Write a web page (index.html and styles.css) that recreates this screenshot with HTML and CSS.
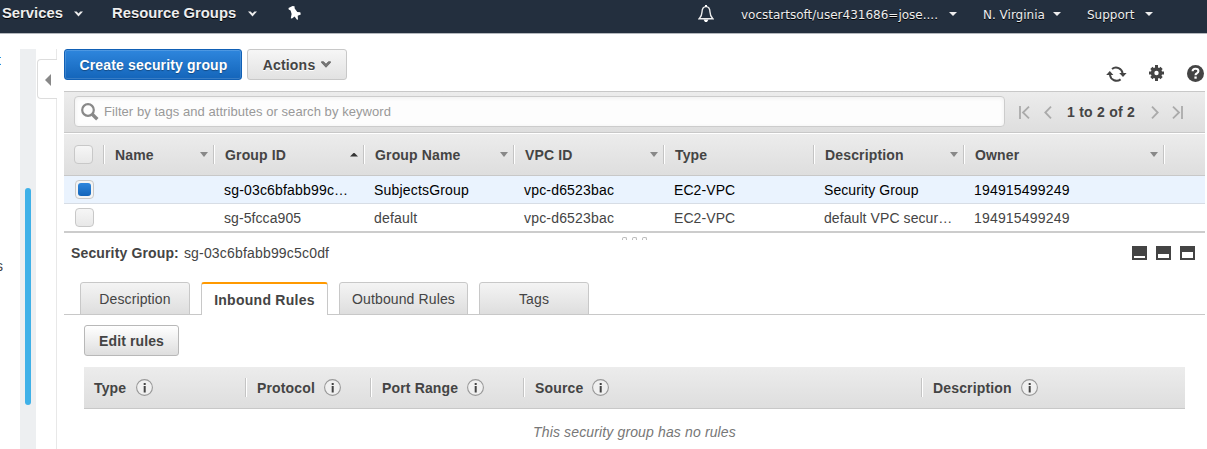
FILE: index.html
```html
<!DOCTYPE html>
<html lang="en">
<head>
<meta charset="utf-8">
<title>Security Groups</title>
<link rel="stylesheet" href="styles.css">
</head>
<body>
<svg class="defs" width="0" height="0">
  <symbol id="chev" viewBox="0 0 9 6"><path d="M0 0.5H2.6L4.5 2.5L6.4 0.5H9L4.5 5.5Z"/></symbol>
  <symbol id="info" viewBox="0 0 17 17"><circle cx="8.5" cy="8.5" r="7.9" fill="#f0f0f0" stroke="#999" stroke-width="1.1"/><path d="M7.7 4h2v2h-2zM7.7 7h2v6.5h-2z" fill="#444"/></symbol>
</svg>
<header class="nav">
  <span class="nav-main services">Services</span><svg class="chev c1"><use href="#chev"/></svg>
  <span class="nav-main">Resource Groups</span><svg class="chev c2"><use href="#chev"/></svg>
  <svg class="pin" width="13" height="14" viewBox="0 0 13 14"><path d="M0.5 2L4.5 0L6.5 0.3L6.7 2.6L9.3 6L12.3 6.2L12.8 8.6L9.7 9.8L10 13.6L9 13.8L6.6 10.6L4 12.6L2.8 12.2L3.6 8L2.6 4.6L0.7 3.6Z" fill="#fff"/></svg>
  <div class="nav-right">
    <svg class="bell" width="16" height="18" viewBox="0 0 16 18"><path d="M8 1.6C5 1.6 4.1 4 4 7C3.9 10.5 3 12 1.2 13.7H14.8C13 12 12.1 10.5 12 7C11.9 4 11 1.6 8 1.6Z" fill="none" stroke="#eee" stroke-width="1.4"/><path d="M7 0h2v2H7zM5.5 14.6h5L9 17H7z" fill="#fff"/></svg>
    <span class="nav-sub user">vocstartsoft/user431686=jose....</span><i class="caret k1"></i>
    <span class="nav-sub region">N. Virginia</span><i class="caret k2"></i>
    <span class="nav-sub support">Support</span><i class="caret"></i>
  </div>
</header>
<div class="page">
  <aside class="side"><span class="side-link blue">t</span><span class="side-link dark">s</span></aside>
  <div class="track"><div class="thumb"></div></div>
  <div class="gutter"><div class="stub"></div><div class="collapse"><i></i></div><div class="line"></div></div>
  <main class="main">
    <div class="toolbar">
      <button class="btn primary">Create security group</button>
      <button class="btn actions">Actions <svg width="10" height="7" viewBox="0 0 10 7"><path d="M0.5 0.7H2.6L5 3.2L7.4 0.7H9.5V1.6L5 6.3L0.5 1.6Z" fill="#777" stroke="#444" stroke-width=".6"/></svg></button>
      <div class="tools">
        <svg width="21" height="17" viewBox="0 0 21 17"><path d="M6 3A6.6 6.6 0 0 1 16.6 7.5M14.6 13.4A6.6 6.6 0 0 1 4 9" fill="none" stroke="#444" stroke-width="2"/><path d="M13.2 7H20.6L17 11ZM0.2 9H7.4L3.8 5Z" fill="#444"/></svg>
        <svg class="gear" width="15" height="16" viewBox="0 0 15 16"><g fill="#444"><circle cx="7.5" cy="8" r="5.7"/><path d="M6 0h3v16H6zM0 6.5h15v3H0z"/><path d="M5.9 0.8h3.2v14.4H5.9zM0.3 6.4h14.4v3.2H0.3z" transform="rotate(45 7.5 8)"/></g><circle cx="7.5" cy="8" r="2.2" fill="#fff"/></svg>
        <svg width="17" height="17" viewBox="0 0 17 17"><circle cx="8.5" cy="8.5" r="8.5" fill="#444"/><path d="M5.6 6.3Q5.7 3.8 8.5 3.8Q11.4 3.8 11.4 6.1Q11.4 7.4 10 8.2Q8.5 9 8.5 10.3" fill="none" stroke="#fff" stroke-width="2.1"/><path d="M7.4 11.5h2.3v2.2H7.4z" fill="#fff"/></svg>
      </div>
    </div>
    <div class="filter">
      <div class="search"><svg width="18" height="18" viewBox="0 0 18 18"><circle cx="7" cy="7" r="5.8" fill="none" stroke="#888" stroke-width="2.2"/><path d="M11 11L16.3 16.2" stroke="#888" stroke-width="3.4"/></svg><span>Filter by tags and attributes or search by keyword</span></div>
      <div class="pager">
        <svg width="11" height="13" viewBox="0 0 11 13"><path d="M1 0V13M10 0.7L4 6.5L10 12.3"/></svg>
        <svg class="prev" width="8" height="13" viewBox="0 0 8 13"><path d="M7 0.7L1.3 6.5L7 12.3"/></svg>
        <b>1 to 2 of 2</b>
        <svg class="next" width="8" height="13" viewBox="0 0 8 13"><path d="M1 0.7L6.7 6.5L1 12.3"/></svg>
        <svg width="11" height="13" viewBox="0 0 11 13"><path d="M10 0V13M1 0.7L7 6.5L1 12.3"/></svg>
      </div>
    </div>
    <div class="grid head">
      <div><i class="check"></i></div><div><span>Name</span><i class="sort"></i></div><div><span>Group ID</span><i class="sort up"></i></div><div><span>Group Name</span><i class="sort"></i></div><div><span>VPC ID</span><i class="sort"></i></div><div><span>Type</span></div><div><span>Description</span><i class="sort"></i></div><div><span>Owner</span><i class="sort"></i></div><div></div>
    </div>
    <div class="grid row selected">
      <div><i class="check on"></i></div><div></div><div>sg-03c6bfabb99c…</div><div>SubjectsGroup</div><div>vpc-d6523bac</div><div class="tight">EC2-VPC</div><div class="tight">Security Group</div><div>194915499249</div><div></div>
    </div>
    <div class="grid row">
      <div><i class="check"></i></div><div></div><div class="tight">sg-5fcca905</div><div>default</div><div>vpc-d6523bac</div><div class="tight">EC2-VPC</div><div class="tight">default VPC secur…</div><div>194915499249</div><div></div>
    </div>
    <div class="splitter"><i></i><i></i><i></i></div>
    <div class="detail">
      <b>Security Group:</b><span class="sgid">sg-03c6bfabb99c5c0df</span>
      <div class="layouts"><i class="low"></i><i class="mid"></i><i class="high"></i></div>
    </div>
    <div class="tabs">
      <div class="tab t1">Description</div><div class="tab active">Inbound Rules</div><div class="tab t3">Outbound Rules</div><div class="tab t4">Tags</div>
    </div>
    <section class="panel">
      <button class="btn edit">Edit rules</button>
      <div class="rules">
        <div class="type"><span>Type</span><svg><use href="#info"/></svg></div><div><span>Protocol</span><svg><use href="#info"/></svg></div><div><span>Port Range</span><svg><use href="#info"/></svg></div><div><span>Source</span><svg><use href="#info"/></svg></div><div><span>Description</span><svg><use href="#info"/></svg></div>
      </div>
      <p class="empty">This security group has no rules</p>
    </section>
  </main>
</div>
</body>
</html>
```
FILE: styles.css
```css
* { box-sizing: border-box; }
body { margin: 0; width: 1207px; height: 449px; overflow: hidden; background: #fff; color: #444; font: 14px/17px "Liberation Sans", Arial, sans-serif; }
svg { display: block; flex: none; }
i { display: block; flex: none; }
.defs { position: absolute; }
.nav { height: 34px; background: #232f3e; border-bottom: 1px solid #b4b8bd; display: flex; align-items: flex-start; color: #eee; }
.nav-main { font-size: 14.8px; font-weight: bold; line-height: 17px; margin-top: 5px; text-shadow: 0 1px 0 #000; white-space: nowrap; }
.services { margin-left: 2px; width: 60px; }
.services + .chev + .nav-main { width: 124px; }
.chev { width: 9px; height: 6px; fill: #eee; margin-top: 11px; }
.c1 { margin-left: 12px; margin-right: 29px; }
.c2 { margin-left: 12px; }
.pin { margin: 6px 0 0 31px; }
.nav-right { margin-left: auto; margin-right: 54px; display: flex; }
.bell { margin: 5px 27px 0 0; }
.nav-sub { font: 12px/16px "DejaVu Sans", sans-serif; margin-top: 7px; white-space: nowrap; text-shadow: 0 1px 0 #000; }
.user { width: 198px; }
.region { width: 60px; }
.support { width: 48px; }
.caret { width: 8px; height: 4px; margin: 12px 0 0 10px; background: #eee; clip-path: polygon(0 0, 100% 0, 50% 100%); }
.k1, .k2 { margin-right: 26px; }
.page { display: flex; height: 415px; }
.side { width: 20px; padding-top: 18px; }
.side-link { display: flex; justify-content: flex-end; overflow: hidden; height: 17px; }
.blue { width: 1px; color: #146eb4; }
.dark { width: 3px; margin-top: 189px; }
.track { width: 16px; margin-top: 15px; background: #edeff1; padding: 139px 5px 0; }
.thumb { width: 6px; height: 217px; border-radius: 3px; background: #3fb1e8; }
.gutter { width: 28px; padding: 15px 7px 0 1px; display: flex; flex-direction: column; }
.stub { height: 10px; border-right: 1px solid #e8e8e8; }
.collapse { height: 40px; border: 1px solid #ddd; border-right: 0; border-radius: 4px 0 0 4px; padding: 14px 0 0 7px; }
.collapse i { width: 6px; height: 12px; background: #888; clip-path: polygon(100% 0, 100% 100%, 0 50%); }
.line { flex: 1; border-right: 1px solid #e8e8e8; }
.main { width: 1141px; }
.toolbar { height: 57px; padding-top: 15px; display: flex; align-items: flex-start; }
.btn { height: 31px; font: bold 14px/17px "Liberation Sans", Arial, sans-serif; border-radius: 3px; padding: 2px 0 0; display: flex; align-items: center; justify-content: center; color: #444; letter-spacing: .22px; white-space: nowrap; }
.primary { width: 178px; color: #fff; border: 1px solid #1160b5; background: linear-gradient(#2e86dd, #1465ba); box-shadow: inset 0 0 0 1px #ffffff26; text-shadow: 0 1px 1px #0005; letter-spacing: .16px; padding-left: 1px; }
.actions { width: 100px; margin-left: 5px; border: 1px solid #c8c8c8; background: linear-gradient(#f6f6f6, #e2e2e2); text-shadow: 0 1px 0 #fff; gap: 6px; letter-spacing: .2px; }
.actions svg { margin-bottom: 3px; }
.tools { margin-left: auto; display: flex; margin-right: 1px; padding-top: 16px; }
.tools svg:first-child { margin: 1px 22px 0 0; }
.gear { margin-right: 23px; }
.filter { height: 42px; border-top: 1px solid #c8c8c8; border-bottom: 1px solid #c8c8c8; background: linear-gradient(#ececec, #dedede); padding: 4px 0 0 10px; display: flex; }
.search { width: 931px; height: 31px; border: 1px solid #ccc; border-radius: 4px; background: #fdfdfd; box-shadow: inset 0 1px 4px #0001; display: flex; align-items: center; padding: 1px 0 0 6px; font-size: 13px; color: #999; }
.search span { margin-left: 5px; padding-bottom: 2px; letter-spacing: .06px; }
.pager { display: flex; align-items: flex-start; padding: 10px 0 0 14px; }
.pager svg { fill: none; stroke: #aaa; stroke-width: 1.8; }
.pager b { margin: -2px 0 0 15px; width: 84px; letter-spacing: .25px; line-height: 16px; white-space: nowrap; }
.pager .prev { margin-left: 14px; }
.pager .next { margin: 0 13px 0 0; }
.grid { display: grid; grid-template-columns: 40px 110px 150px 150px 150px 150px 150px 200px 41px; }
.grid > div { display: flex; align-items: center; white-space: nowrap; }
.head { height: 43px; border-top: 1px solid #fff; border-bottom: 1px solid #c8c8c8; background: linear-gradient(#ececec, #dedede); font-weight: bold; letter-spacing: .15px; padding: 11px 0; }
.head > div { height: 19px; border-left: 1px solid #fff; box-shadow: -1px 0 #c4c4c4; padding: 0 6px 0 10px; justify-content: space-between; }
.head > div:first-child { border: 0; box-shadow: none; }
.head span { padding-top: 2px; }
.sort { width: 8px; height: 5px; background: #888; clip-path: polygon(0 0, 100% 0, 50% 100%); }
.up { height: 4px; background: #333; clip-path: polygon(50% 0, 100% 100%, 0 100%); }
.check { width: 19px; height: 19px; border: 1px solid #c8c8c8; border-radius: 4px; background: linear-gradient(#f6f6f6, #e8e8e8); }
.on { padding: 2px; background: #f4f4f4; }
.on::before { content: ""; display: block; width: 13px; height: 13px; border-radius: 3px; background: linear-gradient(#2e86dd, #1465ba); }
.row { height: 28px; letter-spacing: .18px; }
.tight { letter-spacing: .08px; }
.row > div { padding-left: 10px; }
.row > div:first-child { padding: 0 0 1px 11px; }
.selected { background: #eaf3fe; color: #000; border-bottom: 1px solid #d7dde5; }
.selected > div { padding-top: 2px; }
.selected > div:first-child { padding: 0 0 0 11px; }
.splitter { height: 10px; border-top: 2px solid #ccc; margin-top: -1px; display: flex; justify-content: center; gap: 5px; padding-top: 4px; }
.splitter i { width: 5px; height: 3px; border: 1px solid #bbb; border-bottom: 0; border-radius: 2px 2px 0 0; }
.detail { height: 41px; padding: 4px 10px 0 7px; display: flex; }
.detail b { letter-spacing: .14px; }
.sgid { margin-left: 5px; letter-spacing: .18px; }
.layouts { margin: 1px 0 0 auto; display: flex; gap: 9px; }
.layouts i { width: 15px; height: 14px; background: #444; padding: 10px 2px 2px; }
.layouts i::before { content: ""; display: block; height: 100%; background: #fff; }
.layouts .mid { padding-top: 8px; }
.layouts .high { padding-top: 6px; }
.tabs { height: 33px; display: flex; padding-left: 16px; background: linear-gradient(#c8c8c8, #c8c8c8) bottom / 100% 1px no-repeat; }
.tab { height: 33px; border: 1px solid #c8c8c8; border-radius: 3px 3px 0 0; background: linear-gradient(#f4f4f4, #dedede); display: flex; align-items: center; justify-content: center; letter-spacing: .12px; white-space: nowrap; padding-top: 1px; }
.t1 { width: 110px; }
.active { width: 127px; margin: 0 11px; background: #fff; border-top: 2px solid #f90; border-bottom: 0; font-weight: bold; padding-top: 2px; letter-spacing: .27px; }
.t3 { width: 129px; }
.t4 { width: 110px; margin-left: 11px; }
.panel { padding: 10px 20px 0; }
.edit { width: 95px; border: 1px solid #b8b8b8; background: linear-gradient(#fff, #dedede); letter-spacing: .12px; }
.rules { margin-top: 11px; height: 42px; border-bottom: 1px solid #c8c8c8; background: linear-gradient(#ececec, #dedede); display: grid; grid-template-columns: 162px 125px 153px 398px 263px; padding-top: 11px; font-weight: bold; letter-spacing: .15px; }
.rules > div { height: 19px; display: flex; align-items: center; padding-left: 10px; border-left: 1px solid #fff; box-shadow: -1px 0 #c4c4c4; }
.rules > div:first-child { border: 0; box-shadow: none; }
.rules span { padding-top: 2px; }
.rules svg { width: 17px; height: 17px; margin-left: 9px; }
.rules .type svg { margin-left: 10px; }
.empty { margin: 15px 0 0; text-align: center; font-style: italic; color: #777; letter-spacing: .14px; }
```
